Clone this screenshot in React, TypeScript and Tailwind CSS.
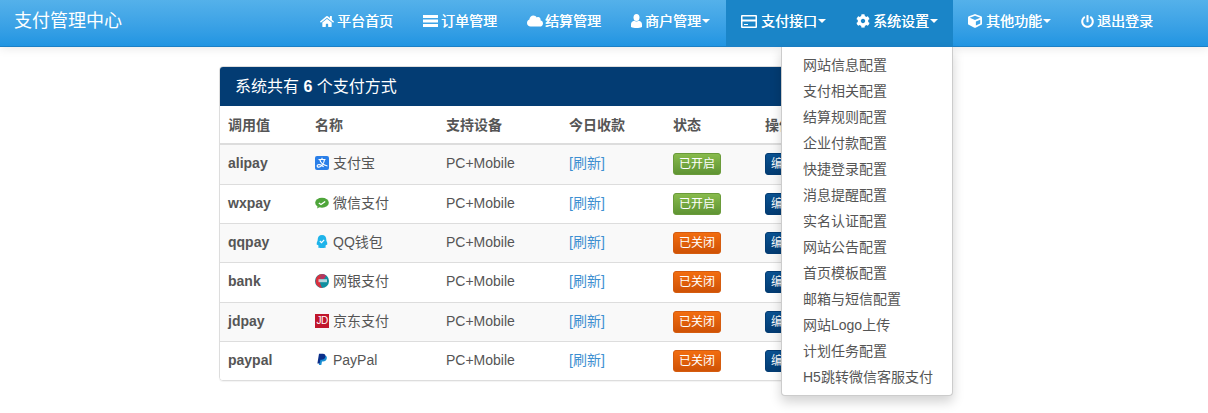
import React from "react";
import { FaHome, FaCloud, FaCog, FaCube, FaPowerOff } from "react-icons/fa";

function ListIcon() {
  return (
    <svg viewBox="0 0 15 12" className="h-[12px] w-[15px]" fill="currentColor">
      <rect y="0" width="15" height="3" />
      <rect y="4.500" width="15" height="3" />
      <rect y="9" width="15" height="3" />
    </svg>
  );
}

function UserIcon() {
  return (
    <svg viewBox="0 0 11 14" className="h-[14px] w-[11px]" fill="currentColor">
      <ellipse cx="5.500" cy="3.500" rx="3" ry="3.500" />
      <path d="M3.200 6.800c1.300 1 3.300 1 4.600 0 2 .6 3.200 1.800 3.200 3.600V13c-1.500.7-3.400 1-5.500 1S1.500 13.700 0 13v-2.600c0-1.800 1.200-3 3.200-3.600z" />
    </svg>
  );
}

function CardIcon() {
  return (
    <svg viewBox="0 0 16 13" className="h-[13px] w-[16px]" fill="currentColor">
      <path d="M1 0h14a1 1 0 0 1 1 1v11a1 1 0 0 1-1 1H1a1 1 0 0 1-1-1V1a1 1 0 0 1 1-1zM1.500 1.500v3h13v-3zM1.500 6.500v5h13v-5z" fillRule="evenodd" />
      <rect x="3" y="9" width="4" height="1" />
    </svg>
  );
}

const navItems = [
  { label: "平台首页", icon: <FaHome className="h-[13px] w-[14px]" />, w: "w-[103px]", slot: "w-[17px]" },
  { label: "订单管理", icon: <ListIcon />, w: "w-[104px]", slot: "w-[18px]" },
  { label: "结算管理", icon: <FaCloud className="h-[14px] w-[16px]" />, w: "w-[104px]", slot: "w-[18px]" },
  { label: "商户管理", icon: <UserIcon />, w: "w-[110px]", slot: "w-[14px]", caret: true },
  { label: "支付接口", icon: <CardIcon />, w: "w-[115px]", slot: "w-[20px]", caret: true, active: true },
  { label: "系统设置", icon: <FaCog className="h-[14px] w-[14px]" />, w: "w-[112px]", slot: "w-[17px]", caret: true, active: true },
  { label: "其他功能", icon: <FaCube className="h-[14px] w-[14px]" />, w: "w-[113px]", slot: "w-[18px]", caret: true },
  { label: "退出登录", icon: <FaPowerOff className="h-[13px] w-[13px]" />, w: "w-[103px]", slot: "w-[16px]" },
];

const menu = [
  "网站信息配置",
  "支付相关配置",
  "结算规则配置",
  "企业付款配置",
  "快捷登录配置",
  "消息提醒配置",
  "实名认证配置",
  "网站公告配置",
  "首页模板配置",
  "邮箱与短信配置",
  "网站Logo上传",
  "计划任务配置",
  "H5跳转微信客服支付",
];

function Alipay() {
  return (
    <svg viewBox="0 0 14 14" className="h-[14px] w-[14px]">
      <rect width="14" height="14" rx="2" fill="#2a7fe8" />
      <path d="M3.500 3.500h7M7 1.800v1.700M4.800 3.700c.8 3.500 3.600 5.400 7.700 6.300M9.400 3.700C9 7 7 10.800 3.800 11.200c-1.700.2-2.200-1.800-.8-2.400 1.600-.7 3.500 0 5.600 2" fill="none" stroke="#fff" strokeWidth="1.200" />
    </svg>
  );
}

function Wechat() {
  return (
    <svg viewBox="0 0 14 14" className="h-[14px] w-[14px]">
      <ellipse cx="7" cy="6.800" rx="6.800" ry="5" fill="#4ea53a" />
      <path d="M2.600 10l-.4 2.400 3-1.600z" fill="#4ea53a" />
      <path d="M3.800 7l2.200 1.500 4.200-3" fill="none" stroke="#fff" strokeWidth="1.400" />
    </svg>
  );
}

function QQ() {
  return (
    <svg viewBox="0 0 14 14" className="h-[14px] w-[14px]">
      <path d="M7 0c2.800 0 4.300 2 4.300 4.400 0 1.200.3 1.700.7 2.700.4 1.300.4 2.900-.2 3-.3 0-.6-.3-.8-.7 0 .8-.3 1.400-.8 1.800.6.300.9.700.8 1.100-.1.500-1.600.7-4 .7s-3.900-.2-4-.7c-.1-.4.200-.8.800-1.100-.5-.4-.8-1-.8-1.800-.2.400-.5.700-.8.700-.6-.1-.6-1.700-.2-3 .4-1 .7-1.500.7-2.700C2.700 2 4.200 0 7 0z" fill="#1fb4ea" />
      <path d="M4.800 6l1.700 1.600 2.700-2.800" fill="none" stroke="#fff" strokeWidth="1.200" />
    </svg>
  );
}

function Bank() {
  return (
    <svg viewBox="0 0 14 14" className="h-[14px] w-[14px]">
      <circle cx="7" cy="7" r="7" fill="#0f8fa0" />
      <path d="M7.500 0A7 7 0 0 0 7.500 14C5.500 12 5 9.500 5 7s.5-5 2.500-7z" fill="#d9303f" />
      <path d="M7.500 0c2 .3 3 1 3.800 1.600L9 5H5.200C5.500 3 6.200 1.200 7.500 0z" fill="#b9345f" />
      <rect x="3.500" y="5.200" width="8.500" height="3" fill="#dfe8ee" opacity=".8" />
    </svg>
  );
}

function Jd() {
  return (
    <span className="flex h-[14px] w-[14px] items-center justify-center bg-[#c1172c] text-[10px] leading-none tracking-[-0.5px] text-white">
      JD
    </span>
  );
}

function Paypal() {
  return (
    <svg viewBox="0 0 14 14" className="h-[14px] w-[14px]">
      <path d="M5.500 2.500h3.700c2 0 3 1 2.600 2.900-.4 2-1.800 3-3.800 3H7L6.300 12H3.900z" fill="#1b90d4" />
      <path d="M4 .8h3.800c2 0 3 1.100 2.600 3-.4 2-1.800 3-3.800 3H5.400L4.800 10.500H2.400z" fill="#0b2f8a" />
    </svg>
  );
}

const rows = [
  { id: "alipay", name: "支付宝", icon: Alipay, on: true, h: "h-[40px]" },
  { id: "wxpay", name: "微信支付", icon: Wechat, on: true, h: "h-[39px]" },
  { id: "qqpay", name: "QQ钱包", icon: QQ, on: false, h: "h-[39px]" },
  { id: "bank", name: "网银支付", icon: Bank, on: false, h: "h-[40px]" },
  { id: "jdpay", name: "京东支付", icon: Jd, on: false, h: "h-[39px]" },
  { id: "paypal", name: "PayPal", icon: Paypal, on: false, h: "h-[39px]" },
];

export default function App() {
  return (
    <div className="relative h-[413px] w-[1208px] overflow-hidden bg-white font-['Liberation_Sans','Noto_Sans_CJK_SC',sans-serif] text-[14px] leading-5 text-[#555]">
      <nav className="flex h-[47px] border-b border-[#1b80c6] bg-gradient-to-b from-[#54b1ea] to-[#2095e2] text-white shadow-[0_1px_10px_rgba(0,0,0,0.1)]">
        <a className="pl-[14px] text-[18px] leading-[42px] text-white">支付管理中心</a>
        <div className="ml-auto mr-[39px] flex">
          {navItems.map((item) => (
            <a
              key={item.label}
              className={`flex h-[46px] items-center pb-[4px] pl-[15px] ${item.w} ${item.active ? "bg-[#1a85c8]" : ""}`}
            >
              <span className={`flex shrink-0 ${item.slot}`}>{item.icon}</span>
              <span className="[text-shadow:0.3px_0_0_#fff]">{item.label}</span>
              {item.caret && (
                <span className="ml-[1px] h-0 w-0 border-x-[4px] border-t-[4px] border-x-transparent border-t-white" />
              )}
            </a>
          ))}
        </div>
      </nav>

      <div className="ml-[219px] mt-[19px] w-[680px] overflow-hidden rounded border border-[#ddd] shadow-[0_1px_1px_rgba(0,0,0,0.05)]">
        <div className="flex h-[39px] items-center bg-[#033c73] px-[15px] text-[16px] text-white">
          系统共有&nbsp;<b>6</b>&nbsp;个支付方式
        </div>
        <table className="w-full table-fixed border-collapse">
          <thead>
            <tr className="h-[38px] border-b-2 border-[#ddd] text-left">
              <th className="w-[87px] pl-2 font-bold">调用值</th>
              <th className="w-[131px] pl-2 font-bold">名称</th>
              <th className="w-[123px] pl-2 font-bold">支持设备</th>
              <th className="w-[104px] pl-2 font-bold">今日收款</th>
              <th className="w-[92px] pl-2 font-bold">状态</th>
              <th className="pl-2 font-bold">操作</th>
            </tr>
          </thead>
          <tbody>
            {rows.map((row, i) => {
              const Icon = row.icon;
              return (
                <tr
                  key={row.id}
                  className={`${row.h} ${i < 5 ? "border-b border-[#ddd]" : ""} ${i % 2 === 0 ? "bg-[#f9f9f9]" : "bg-white"}`}
                >
                  <td className="pb-[2px] pl-2 font-bold">{row.id}</td>
                  <td className="pb-[2px] pl-2">
                    <span className="flex items-center gap-1">
                      <Icon />
                      {row.name}
                    </span>
                  </td>
                  <td className="pb-[2px] pl-2">PC+Mobile</td>
                  <td className="pb-[2px] pl-2 text-[#3d8fd1]">[刷新]</td>
                  <td className="pl-2">
                    <button
                      className={`h-[22px] w-[48px] rounded-[3px] border text-[12px] leading-[18px] text-white ${
                        row.on
                          ? "border-[#6a9b3a] bg-gradient-to-b from-[#88bb4c] to-[#5f9434]"
                          : "border-[#d55c0f] bg-gradient-to-b from-[#f26d10] to-[#cf5206]"
                      }`}
                    >
                      {row.on ? "已开启" : "已关闭"}
                    </button>
                  </td>
                  <td className="pl-2">
                    <button className="h-[22px] w-[36px] rounded-[3px] border border-[#033c73] bg-gradient-to-b from-[#0a5292] to-[#033c73] text-[12px] leading-[18px] text-white">
                      编辑
                    </button>
                  </td>
                </tr>
              );
            })}
          </tbody>
        </table>
      </div>

      <ul className="absolute left-[781px] top-[47px] w-[172px] rounded-b border border-t-0 border-[#ccc] bg-white py-[5px] shadow-[0_6px_12px_rgba(0,0,0,0.175)]">
        {menu.map((label) => (
          <li key={label} className="h-[26px] pl-[21px] leading-[26px] text-[#555]">
            {label}
          </li>
        ))}
      </ul>
    </div>
  );
}
